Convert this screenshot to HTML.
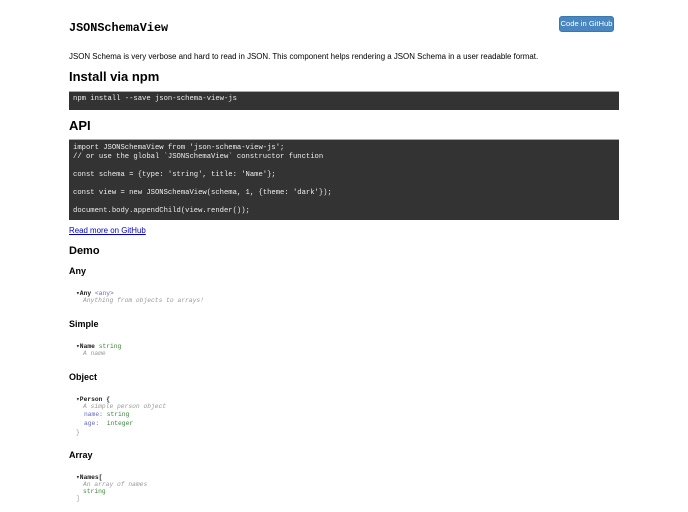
<!DOCTYPE html>
<html><head><style>
body{margin:0;width:688px;height:512px;background:#fff;position:relative;font-family:"Liberation Sans",sans-serif;color:#000;overflow:hidden}
.a{position:absolute;white-space:pre;line-height:1}
.m{font-family:"Liberation Mono",monospace}
h{position:absolute;font-weight:bold;white-space:pre;line-height:1}
.pre{position:absolute;left:69px;width:550px;background:#333;border-top:1px solid #aaa;}
.c{color:#eee;font-size:7.2px}
.t{font-size:6.3px;font-family:"Liberation Mono",monospace}
.d{color:#999;font-style:italic}
.g{color:#3a8a3a}
.p{color:#66c}
.b{font-weight:bold;color:#222}
</style></head><body>
<div class="a m" style="left:69px;top:23px;font-size:11.8px;font-weight:bold">JSONSchemaView</div>
<div class="a" style="left:559px;top:16px;width:55px;height:16px;background:#4a87c0;border:1px solid #3b78b0;border-radius:3px;box-sizing:border-box;color:#fff;font-size:7.6px;text-align:center;line-height:14px">Code in GitHub</div>
<div class="a" style="left:69px;top:53px;font-size:7.9px">JSON Schema is very verbose and hard to read in JSON. This component helps rendering a JSON Schema in a user readable format.</div>
<h style="left:69px;top:70px;font-size:13px">Install via npm</h>
<div class="pre" style="top:91px;height:18px"></div>
<div class="a m c" style="left:73px;top:96px">npm install --save json-schema-view-js</div>
<h style="left:69px;top:119px;font-size:13px">API</h>
<div class="pre" style="top:139px;height:80px"></div>
<div class="a m c" style="left:73px;top:144px;line-height:9px">import JSONSchemaView from 'json-schema-view-js';
// or use the global `JSONSchemaView` constructor function

const schema = {type: 'string', title: 'Name'};

const view = new JSONSchemaView(schema, 1, {theme: 'dark'});

document.body.appendChild(view.render());</div>
<div class="a" style="left:69px;top:227px;font-size:7.9px;color:#00c;text-decoration:underline">Read more on GitHub</div>
<h style="left:69px;top:246px;font-size:11px">Demo</h>
<h style="left:69px;top:267px;font-size:9px">Any</h>
<div class="a t" style="left:76px;top:291px"><span class="b">▾Any</span> <span class="p">&lt;any&gt;</span></div>
<div class="a t d" style="left:83px;top:298px">Anything from objects to arrays!</div>
<h style="left:69px;top:320px;font-size:9px">Simple</h>
<div class="a t" style="left:76px;top:344px"><span class="b">▾Name</span> <span class="g">string</span></div>
<div class="a t d" style="left:83px;top:351px">A name</div>
<h style="left:69px;top:373px;font-size:9px">Object</h>
<div class="a t" style="left:76px;top:397px"><span class="b">▾Person {</span></div>
<div class="a t d" style="left:83px;top:404px">A simple person object</div>
<div class="a t" style="left:84px;top:412px"><span class="p">name:</span> <span class="g">string</span></div>
<div class="a t" style="left:84px;top:421px"><span class="p">age:</span>  <span class="g">integer</span></div>
<div class="a t" style="left:76px;top:430px;color:#999">}</div>
<h style="left:69px;top:451px;font-size:9px">Array</h>
<div class="a t" style="left:76px;top:475px"><span class="b">▾Names[</span></div>
<div class="a t d" style="left:83px;top:482px">An array of names</div>
<div class="a t g" style="left:83px;top:489px">string</div>
<div class="a t" style="left:76px;top:496px;color:#999">]</div>
</body></html>
